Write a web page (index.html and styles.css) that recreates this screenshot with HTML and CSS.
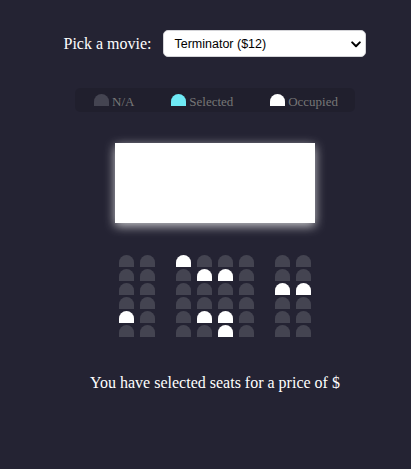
FILE: index.html
```html
<!DOCTYPE html>
<html lang="en">
<head>
<meta charset="UTF-8">
<title>Movie Seat Booking</title>
<link rel="stylesheet" href="styles.css">
</head>
<body>
  <div class="movie-container">
    <label for="movie">Pick a movie:</label>
    <span class="select-wrap">
      <select id="movie">
        <option value="12">Terminator ($12)</option>
        <option value="8">Deadpool ($8)</option>
        <option value="10">The Matrix ($10)</option>
      </select>
      <svg class="chev" viewBox="0 0 10 7" aria-hidden="true"><path d="M1.2 1.4 L5 5.2 L8.8 1.4" fill="none" stroke="#000" stroke-width="2" stroke-linecap="round" stroke-linejoin="round"/></svg>
    </span>
  </div>

  <ul class="showcase">
    <li><div class="seat"></div><small>N/A</small></li>
    <li><div class="seat selected"></div><small>Selected</small></li>
    <li><div class="seat occupied"></div><small>Occupied</small></li>
  </ul>

  <div class="container">
    <div class="screen"></div>
    <div class="row">
      <div class="seat"></div><div class="seat"></div><div class="seat occupied"></div><div class="seat"></div>
      <div class="seat"></div><div class="seat"></div><div class="seat"></div><div class="seat"></div>
    </div>
    <div class="row">
      <div class="seat"></div><div class="seat"></div><div class="seat"></div><div class="seat occupied"></div>
      <div class="seat occupied"></div><div class="seat"></div><div class="seat"></div><div class="seat"></div>
    </div>
    <div class="row">
      <div class="seat"></div><div class="seat"></div><div class="seat"></div><div class="seat"></div>
      <div class="seat"></div><div class="seat"></div><div class="seat occupied"></div><div class="seat occupied"></div>
    </div>
    <div class="row">
      <div class="seat"></div><div class="seat"></div><div class="seat"></div><div class="seat"></div>
      <div class="seat"></div><div class="seat"></div><div class="seat"></div><div class="seat"></div>
    </div>
    <div class="row">
      <div class="seat occupied"></div><div class="seat"></div><div class="seat"></div><div class="seat occupied"></div>
      <div class="seat occupied"></div><div class="seat"></div><div class="seat"></div><div class="seat"></div>
    </div>
    <div class="row">
      <div class="seat"></div><div class="seat"></div><div class="seat"></div><div class="seat"></div>
      <div class="seat occupied"></div><div class="seat"></div><div class="seat"></div><div class="seat"></div>
    </div>
  </div>

  <p class="text">You have selected <span id="count"></span> seats for a price of $<span id="total"></span></p>
</body>
</html>
```

FILE: styles.css
```css
* {
  box-sizing: border-box;
}

body {
  margin: 0;
  padding-left: 19px;
  min-height: 100vh;
  background-color: #242333;
  color: #fff;
  font-family: "Liberation Serif", "Times New Roman", serif;
  display: flex;
  flex-direction: column;
  align-items: center;
}

.movie-container {
  margin-top: 30px;
  display: flex;
  align-items: center;
  font-size: 16px;
}

.select-wrap {
  position: relative;
  display: block;
  margin-left: 12px;
}

.select-wrap select {
  appearance: none;
  -webkit-appearance: none;
  display: block;
  width: 203px;
  height: 27px;
  margin: 0;
  padding: 0 0 0 10px;
  border: 1px solid #d4d4d8;
  border-radius: 5px;
  background: #fff;
  color: #000;
  font-family: "Liberation Sans", Arial, sans-serif;
  font-size: 12.5px;
}

.chev {
  position: absolute;
  right: 5px;
  top: 11px;
  width: 10px;
  height: 7px;
  pointer-events: none;
}

.showcase {
  margin: 31px 0 0;
  padding: 0 17px 0 16px;
  width: 280px;
  height: 24px;
  list-style: none;
  display: flex;
  justify-content: space-between;
  align-items: center;
  background: rgba(0, 0, 0, 0.1);
  border-radius: 5px;
  color: #777;
}

.showcase li {
  display: flex;
  align-items: center;
}

.showcase small {
  font-size: 13px;
  padding-top: 3px;
}

.seat {
  width: 15px;
  height: 12px;
  margin: 1px 3px;
  background-color: #444451;
  border-top-left-radius: 10px;
  border-top-right-radius: 10px;
}

.seat.selected {
  background-color: #6feaf6;
}

.seat.occupied {
  background-color: #fff;
}

.container {
  display: flex;
  flex-direction: column;
  align-items: center;
}

.screen {
  width: 200px;
  height: 80px;
  margin: 31px 0;
  background-color: #fff;
  box-shadow: 0 3px 10px rgba(255, 255, 255, 0.75);
}

.row {
  display: flex;
}

.row .seat:nth-of-type(2) {
  margin-right: 18px;
}

.row .seat:nth-last-of-type(2) {
  margin-left: 18px;
}

.text {
  margin: 36px 0 0;
  font-size: 16px;
}
```
